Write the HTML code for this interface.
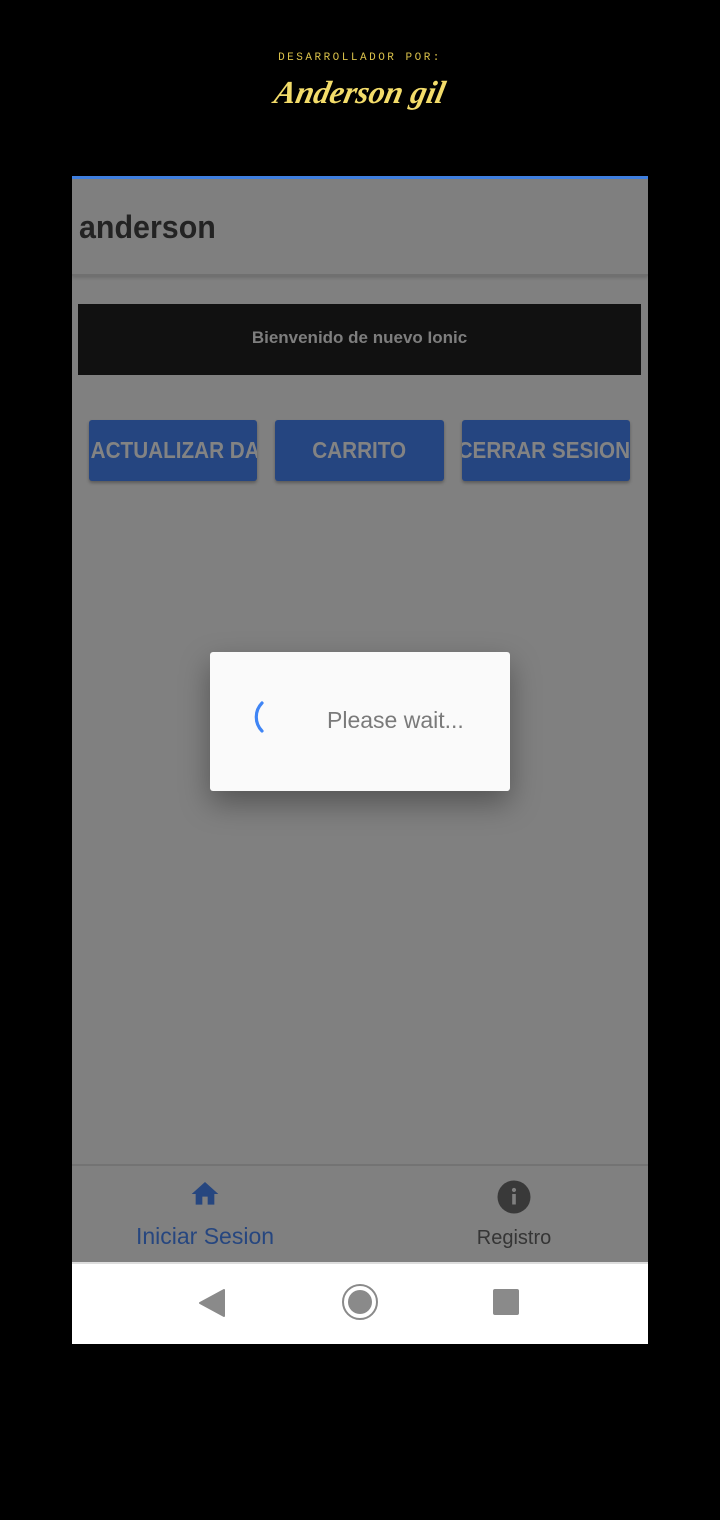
<!DOCTYPE html>
<html><head><meta charset="utf-8"><style>
*{margin:0;padding:0;box-sizing:border-box}
body{width:720px;height:1520px;background:#000;position:relative;overflow:hidden;font-family:"Liberation Sans",Roboto,sans-serif}
.a{position:absolute}
.btn{position:absolute;top:420px;height:61px;background:#254580;border-radius:3px;box-shadow:0 2px 3px rgba(0,0,0,.3);color:#838383;font-size:23px;font-weight:bold;line-height:61px;text-align:center;white-space:nowrap;overflow:hidden}
.btn span{display:inline-block;transform:scaleX(.9)}
</style></head><body>
<div class="a" style="left:0;top:52px;width:720px;text-align:center;color:#d9c04a;font-family:'Liberation Mono',monospace;font-size:11px;letter-spacing:2.5px">DESARROLLADOR POR:</div>
<div class="a" style="left:0;top:74px;width:720px;text-align:center;color:#f3dc6a;font-family:'Liberation Serif',serif;font-style:italic;font-weight:bold;font-size:32px;transform:skewX(-12deg)">Anderson gil</div>

<div class="a" style="left:72px;top:176px;width:576px;height:1168px;background:#808080">
<div class="a" style="left:0;top:0;width:576px;height:3px;background:#3f7fe0"></div>
<div class="a" style="left:0;top:3px;width:576px;height:97px;background:#7f7f7f;border-bottom:2px solid #707070;box-shadow:0 2px 3px rgba(0,0,0,.15)"></div>
<div class="a" style="left:7px;top:33px;font-size:32px;color:#232323;font-weight:bold;transform:scaleX(.95);transform-origin:left">anderson</div>
<div class="a" style="left:6px;top:128px;width:563px;height:71px;background:#111;color:#7e7e7e;font-size:17px;font-weight:bold;text-align:center;line-height:67px">Bienvenido de nuevo Ionic</div>
</div>
<div class="btn" style="left:89px;width:168px"><span style="margin-left:-10px">ACTUALIZAR DATOS</span></div>
<div class="btn" style="left:275px;width:169px"><span>CARRITO</span></div>
<div class="btn" style="left:462px;width:168px;"><span style="margin-left:-14px">CERRAR SESION</span></div>

<div class="a" style="left:210px;top:652px;width:300px;height:139px;background:#fafafa;border-radius:3px;box-shadow:0 12px 30px rgba(0,0,0,.35)">
<svg class="a" style="left:42px;top:48px" width="14" height="34"><path d="M10 3 A20 20 0 0 0 10 31" fill="none" stroke="#3f85f5" stroke-width="3.2" stroke-linecap="round"/></svg>
<div class="a" style="left:117px;top:55px;font-size:23px;color:#7a7a7a">Please wait...</div>
</div>

<div class="a" style="left:72px;top:1164px;width:576px;height:2px;background:#737373"></div>
<svg class="a" style="left:189px;top:1178px" width="32" height="32" viewBox="0 0 24 24"><path d="M10 20v-6h4v6h5v-8h3L12 3 2 12h3v8z" fill="#26467f"/></svg>
<div class="a" style="left:72px;top:1223px;width:266px;text-align:center;font-size:23px;color:#26467f">Iniciar Sesion</div>
<svg class="a" style="left:496px;top:1179px" width="36" height="36" viewBox="0 0 24 24"><circle cx="12" cy="12" r="11" fill="#393939"/><rect x="10.8" y="10" width="2.4" height="7" fill="#808080"/><circle cx="12" cy="7.3" r="1.4" fill="#808080"/></svg>
<div class="a" style="left:414px;top:1227px;width:200px;text-align:center;font-size:20px;color:#353535">Registro</div>

<div class="a" style="left:72px;top:1262px;width:576px;height:82px;background:#fff;border-top:2px solid #ddd"></div>
<svg class="a" style="left:195px;top:1286px" width="32" height="32"><path d="M29 4 L29 30 L5 17 Z" fill="#8a8a8a" stroke="#8a8a8a" stroke-linejoin="round" stroke-width="2"/></svg>
<svg class="a" style="left:340px;top:1282px" width="40" height="40"><circle cx="20" cy="20" r="17" fill="none" stroke="#8a8a8a" stroke-width="2"/><circle cx="20" cy="20" r="12" fill="#8a8a8a"/></svg>
<div class="a" style="left:493px;top:1289px;width:26px;height:26px;background:#8a8a8a;border-radius:2px"></div>
</body></html>
